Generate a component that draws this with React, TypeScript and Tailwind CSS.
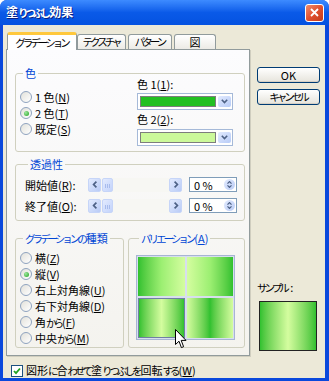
import React from 'react'

// kana runs are set tighter, like the proportional kana of the original UI font
function J({ t }: { t: string }) {
  const parts = t.match(/[\u3040-\u30ff]+|[^\u3040-\u30ff]+/g) ?? []
  return (
    <>
      {parts.map((p, i) =>
        /[\u3040-\u30ff]/.test(p) ? (
          <span key={i} className="text-[10.5px] tracking-[-3px] mr-[1px]">
            {p}
          </span>
        ) : (
          <React.Fragment key={i}>{p}</React.Fragment>
        )
      )}
    </>
  )
}

function Hotkey({ k }: { k: string }) {
  return (
    <>
      (<u className="underline-offset-[1px]">{k}</u>)
    </>
  )
}

function Radio({ label, hk, checked }: { label: string; hk: string; checked?: boolean }) {
  return (
    <div className="h-[16px] flex items-center">
      <span className="w-[12px] h-[12px] shrink-0 rounded-full border border-[#8fa3bf] bg-linear-to-br from-[#e2e1da] to-white flex items-center justify-center">
        {checked && <span className="w-[5px] h-[5px] rounded-full bg-[radial-gradient(circle_at_35%_35%,#9ee89e,#21a121)]" />}
      </span>
      <span className="ml-[3px] whitespace-nowrap">
        <J t={label} />
        <Hotkey k={hk} />
      </span>
    </div>
  )
}

function Chevron() {
  return (
    <svg width="7" height="5" viewBox="0 0 7 5">
      <path d="M0.8 0.8 L3.5 3.6 L6.2 0.8" stroke="#4d6185" strokeWidth="1.6" fill="none" />
    </svg>
  )
}

function ColorCombo({ color }: { color: string }) {
  return (
    <div className="h-[17px] border border-[#a5b9d8] bg-white flex items-stretch p-[2px] pr-[1px]">
      <div className="flex-1 border border-[#7d7d7d]" style={{ backgroundColor: color }} />
      <div className="w-[13px] ml-[2px] rounded-[2px] bg-linear-to-br from-[#e2eafe] to-[#b7cbf7] flex items-center justify-center">
        <Chevron />
      </div>
    </div>
  )
}

function ArrowBtn({ dir }: { dir: 'l' | 'r' }) {
  return (
    <span className="w-[13px] h-[14px] shrink-0 rounded-[2px] border border-[#c6d5f8] bg-linear-to-br from-[#e3ebfe] to-[#b9cbf6] flex items-center justify-center">
      <svg width="6" height="7" viewBox="0 0 6 7">
        <path
          d={dir === 'l' ? 'M4.4 0.6 L1.6 3.5 L4.4 6.4' : 'M1.6 0.6 L4.4 3.5 L1.6 6.4'}
          stroke="#4d6185"
          strokeWidth="1.7"
          fill="none"
        />
      </svg>
    </span>
  )
}

function Slider() {
  return (
    <div className="w-[94px] h-[14px] flex items-center bg-[#f7f7f3]">
      <ArrowBtn dir="l" />
      <span className="w-[11px] h-[14px] ml-[1px] rounded-[2px] border border-[#c6d5f8] bg-linear-to-br from-[#e3ebfe] to-[#c3d3fb] flex items-end justify-center gap-[1px] pb-[3px]">
        <span className="w-[1px] h-[4px] bg-[#a8bcec]" />
        <span className="w-[1px] h-[4px] bg-[#a8bcec]" />
        <span className="w-[1px] h-[4px] bg-[#a8bcec]" />
      </span>
      <span className="flex-1" />
      <ArrowBtn dir="r" />
    </div>
  )
}

function SpinBox() {
  return (
    <div className="w-[48px] h-[15px] border border-[#7f9db9] bg-white flex items-center pl-[4px] pr-[1px]">
      <span className="flex-1">0 %</span>
      <span className="w-[11px] h-[11px] rounded-full bg-linear-to-br from-[#e3ebfe] to-[#b9cbf6] flex flex-col items-center justify-center gap-[1px]">
        <svg width="5" height="3" viewBox="0 0 5 3">
          <path d="M0.5 2.6 L2.5 0.6 L4.5 2.6" stroke="#4d6185" strokeWidth="1.2" fill="none" />
        </svg>
        <svg width="5" height="3" viewBox="0 0 5 3">
          <path d="M0.5 0.4 L2.5 2.4 L4.5 0.4" stroke="#4d6185" strokeWidth="1.2" fill="none" />
        </svg>
      </span>
    </div>
  )
}

function Group({ title, className, children }: { title: React.ReactNode; className?: string; children: React.ReactNode }) {
  return (
    <fieldset className={'border border-[#d0d0bf] rounded-[3px] ' + (className ?? '')}>
      <legend className="ml-[3px] px-[2px] leading-[12px] whitespace-nowrap text-[#0046d5]">{title}</legend>
      {children}
    </fieldset>
  )
}

function Button({ children }: { children: React.ReactNode }) {
  return (
    <div className="w-[63px] h-[16px] rounded-[3px] border border-[#003c74] bg-linear-to-b from-white to-[#e6e4dc] flex items-center justify-center shadow-[inset_0_-1px_0_#d6d0c5]">
      {children}
    </div>
  )
}

function Cursor() {
  return (
    <svg className="absolute left-[38px] top-[73px]" width="12" height="20" viewBox="0 0 12 20">
      <path
        d="M0.5 0.5 L0.5 15.5 L4 12.2 L6.4 18.6 L8.6 17.7 L6.2 11.4 L11 11.4 Z"
        fill="white"
        stroke="black"
        strokeWidth="1"
        strokeLinejoin="round"
      />
    </svg>
  )
}

export default function App() {
  return (
    <div className="w-[329px] h-[381px] bg-[#0a48dc] rounded-t-[7px] flex flex-col text-[11px] leading-[12px] text-black overflow-hidden font-['Noto_Sans_CJK_JP',sans-serif]">
      {/* Title bar */}
      <div className="h-[25px] shrink-0 flex items-center pl-[6px] pr-[5px] bg-linear-to-b from-[#3d8bff] via-[#0a5ae8] to-[#0552e0]">
        <span className="flex-1 text-white font-bold text-[12px] [text-shadow:1px_1px_0_#0a1e80]">
          <J t="塗りつぶし効果" />
        </span>
        <span className="w-[19px] h-[18px] rounded-[3px] border border-white bg-linear-to-br from-[#f08b6c] via-[#e0502f] to-[#c33b1a] flex items-center justify-center">
          <svg width="9" height="9" viewBox="0 0 9 9">
            <path d="M1 1 L8 8 M8 1 L1 8" stroke="white" strokeWidth="1.8" />
          </svg>
        </span>
      </div>

      {/* Body */}
      <div className="flex-1 ml-[3px] mr-[4px] mb-[3px] bg-[#ece9d8] flex flex-col">
        <div className="flex">
          {/* Left: tabs + panel */}
          <div className="w-[247px] pl-[3px] pt-[7px]">
            <div className="h-[17px] flex items-end pl-[1px]">
              <div className="relative z-10 -mb-px w-[70px] h-[18px] bg-white border-x border-[#919b9c] border-t-[3px] border-t-[#ffc83c] rounded-t-[3px] flex items-center justify-center whitespace-nowrap">
                <J t="グラデーション" />
              </div>
              <div className="w-[49px] h-[15px] bg-linear-to-b from-white to-[#ecebe5] border border-b-0 border-[#919b9c] rounded-t-[3px] flex items-center justify-center whitespace-nowrap">
                <J t="テクスチャ" />
              </div>
              <div className="ml-[2px] w-[44px] h-[15px] bg-linear-to-b from-white to-[#ecebe5] border border-b-0 border-[#919b9c] rounded-t-[3px] flex items-center justify-center whitespace-nowrap">
                <J t="パターン" />
              </div>
              <div className="ml-[2px] w-[42px] h-[15px] bg-linear-to-b from-white to-[#ecebe5] border border-b-0 border-[#919b9c] rounded-t-[3px] flex items-center justify-center">
                図
              </div>
            </div>

            <div className="h-[307px] border border-[#919b9c] bg-linear-to-b from-[#fcfcfe] to-[#f4f3ee] shadow-[1px_1px_0_#d0cebf] pl-[8px] pr-[4px] pt-[17px]">
              {/* 色 */}
              <Group title="色" className="pl-[4px] pr-[7px] pb-[5px]">
                <div className="flex">
                  <div className="w-[117px] pt-[10px]">
                    <Radio label="1 色" hk="N" />
                    <Radio label="2 色" hk="T" checked />
                    <Radio label="既定" hk="S" />
                  </div>
                  <div className="w-[96px] -mt-[1px]">
                    <div className="h-[12px]">
                      色 1<Hotkey k="1" />:
                    </div>
                    <div className="mt-[3px]">
                      <ColorCombo color="#22bf22" />
                    </div>
                    <div className="h-[12px] mt-[3px]">
                      色 2<Hotkey k="2" />:
                    </div>
                    <div className="mt-[4px]">
                      <ColorCombo color="#cbf99a" />
                    </div>
                  </div>
                </div>
              </Group>

              {/* 透過性 */}
              <Group title="透過性" className="mt-[6px] pl-[9px] pr-[5px] pb-[7px]">
                <div className="mt-[7px] h-[15px] flex items-center">
                  <span className="w-[63px] whitespace-nowrap">
                    開始値<Hotkey k="R" />:
                  </span>
                  <Slider />
                  <span className="w-[7px]" />
                  <SpinBox />
                </div>
                <div className="mt-[6px] h-[15px] flex items-center">
                  <span className="w-[63px] whitespace-nowrap">
                    終了値<Hotkey k="O" />:
                  </span>
                  <Slider />
                  <span className="w-[7px]" />
                  <SpinBox />
                </div>
              </Group>

              <div className="mt-[11px] flex gap-[4px]">
                {/* グラデーションの種類 */}
                <Group title={<J t="グラデーションの種類" />} className="w-[109px] pl-[4px] pb-[1px]">
                  <div className="mt-[5px]">
                    <Radio label="横" hk="Z" />
                    <Radio label="縦" hk="V" checked />
                    <Radio label="右上対角線" hk="U" />
                    <Radio label="右下対角線" hk="D" />
                    <Radio label="角から" hk="F" />
                    <Radio label="中央から" hk="M" />
                  </div>
                </Group>

                {/* バリエーション */}
                <Group
                  title={
                    <>
                      <J t="バリエーション" />
                      <Hotkey k="A" />
                    </>
                  }
                  className="flex-1 pl-[7px]"
                >
                  <div className="relative mt-[10px] w-[99px] h-[85px] border border-[#a7b5d3] bg-[#d7deee] grid grid-cols-2 gap-[2px] p-[1px]">
                    <div className="bg-linear-to-r from-[#2fc12f] via-[#9cef72] to-[#d4fd9f]" />
                    <div className="bg-linear-to-r from-[#d4fd9f] via-[#9cef72] to-[#2fc12f]" />
                    <div className="border border-[#6f7fa3] bg-linear-to-r from-[#2fc12f] via-[#d4fd9f] to-[#2fc12f]" />
                    <div className="bg-linear-to-r from-[#d4fd9f] via-[#2fc12f] to-[#d4fd9f]" />
                    <Cursor />
                  </div>
                </Group>
              </div>
            </div>

            <div className="mt-[8px] ml-[5px] flex items-center">
              <span className="w-[12px] h-[12px] border border-[#1c5180] bg-white flex items-center justify-center">
                <svg width="8" height="8" viewBox="0 0 8 8">
                  <path d="M1 4 L3 6.2 L7 1.5" stroke="#21a121" strokeWidth="1.8" fill="none" />
                </svg>
              </span>
              <span className="ml-[3px] whitespace-nowrap">
                <J t="図形に合わせて塗りつぶしを回転する" />
                <Hotkey k="W" />
              </span>
            </div>
          </div>

          {/* Right: buttons + sample */}
          <div className="flex-1 pl-[7px] pt-[42px]">
            <Button>OK</Button>
            <div className="mt-[6px]">
              <Button>
                <J t="キャンセル" />
              </Button>
            </div>
            <div className="mt-[176px] h-[12px] whitespace-nowrap">
              <J t="サンプル" /> :
            </div>
            <div className="mt-[8px] ml-[2px] w-[58px] h-[50px] border border-[#222] bg-linear-to-r from-[#2fc12f] via-[#d4fd9f] to-[#2fc12f]" />
          </div>
        </div>
      </div>
    </div>
  )
}
